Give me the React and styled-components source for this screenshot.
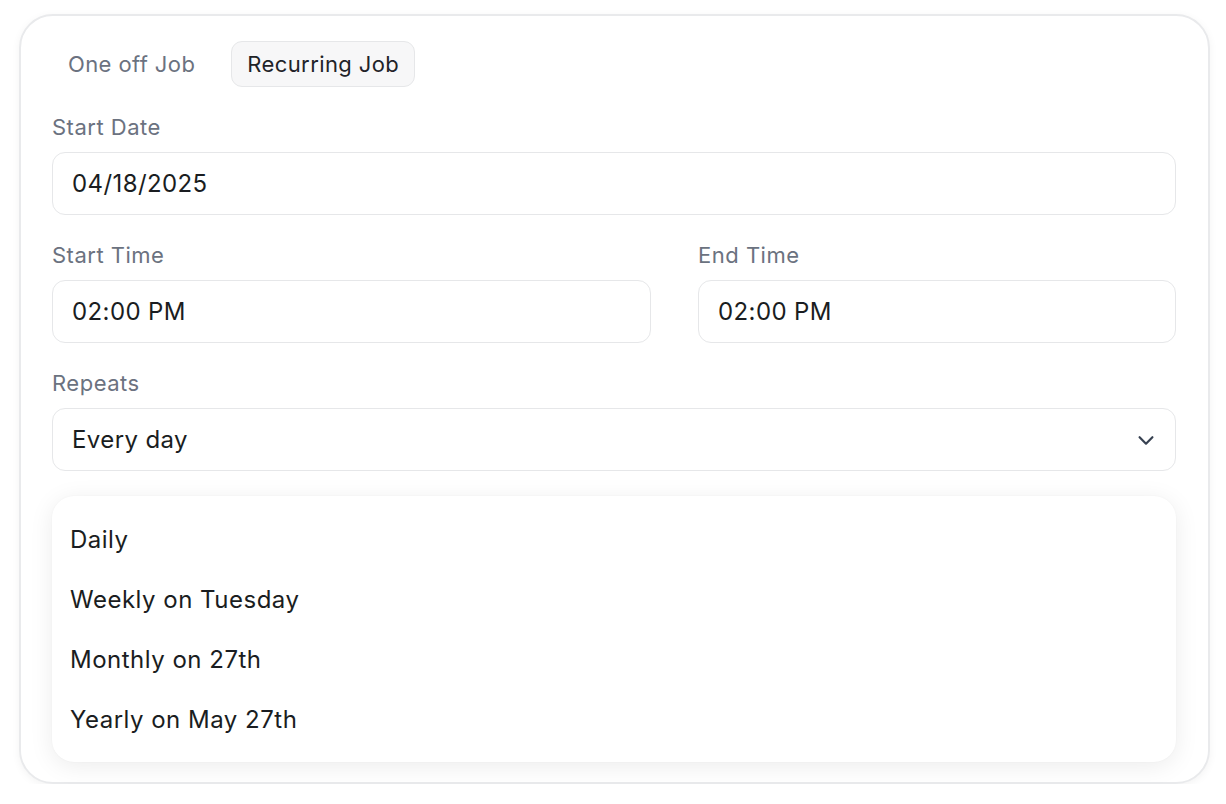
import React from 'react'
import styled, {createGlobalStyle} from 'styled-components'

const Global = createGlobalStyle`
  body { margin: 0; background: #ffffff; font-family: Inter, "Noto Sans", sans-serif; }
`

const Card = styled.div`
  box-sizing: border-box;
  margin: 14px 0 0 19px;
  width: 1191px;
  height: 770px;
  border: 2px solid #e9eaec;
  border-radius: 34px;
  background: #fff;
  box-shadow: 0 2px 8px rgba(0,0,0,0.05);
  padding: 25px 32px 0 31px;
`

const Tabs = styled.div`
  display: flex;
  gap: 20px;
  margin-bottom: 27px;
`

const Tab = styled.div`
  height: 46px;
  box-sizing: border-box;
  display: flex;
  align-items: center;
  padding: 0 15px;
  font-size: 22px;
  letter-spacing: 0.4px;
  border-radius: 11px;
  color: ${p => p.active ? '#1f2328' : '#6b7280'};
  background: ${p => p.active ? '#f7f7f8' : 'transparent'};
  border: 1px solid ${p => p.active ? '#e6e7e9' : 'transparent'};
`

const Label = styled.div`
  font-size: 22px;
  letter-spacing: 0.5px;
  color: #6b7280;
  margin-bottom: 12px;
  line-height: 26px;
`

const Field = styled.div`
  box-sizing: border-box;
  height: 63px;
  border: 1.5px solid #e6e7e9;
  border-radius: 13px;
  display: flex;
  align-items: center;
  justify-content: space-between;
  padding: 0 18px 0 19px;
  font-size: 24px;
  letter-spacing: 0.4px;
  color: #1a1d21;
  margin-bottom: 27px;
`

const Row = styled.div`
  display: grid;
  grid-template-columns: 599px 1fr;
  gap: 47px;
`

const Menu = styled.div`
  margin-top: -2px;
  border-radius: 22px;
  background: #fff;
  box-shadow: 0 4px 24px rgba(0,0,0,0.08), 0 0 2px rgba(0,0,0,0.04);
  padding: 13px 18px;
`

const Item = styled.div`
  height: 60px;
  display: flex;
  align-items: center;
  font-size: 24px;
  letter-spacing: 0.5px;
  color: #1a1d21;
`

export default function App() {
  return (
    <>
      <Global/>
      <Card>
        <Tabs>
          <Tab>One off Job</Tab>
          <Tab active>Recurring Job</Tab>
        </Tabs>
        <Label>Start Date</Label>
        <Field>04/18/2025</Field>
        <Row>
          <div>
            <Label>Start Time</Label>
            <Field>02:00 PM</Field>
          </div>
          <div>
            <Label>End Time</Label>
            <Field>02:00 PM</Field>
          </div>
        </Row>
        <Label>Repeats</Label>
        <Field>
          Every day
          <svg width="22" height="22" viewBox="0 0 24 24" fill="none" stroke="#374151" strokeWidth="2.4" strokeLinecap="round" strokeLinejoin="round"><path d="M5 9l7 7 7-7"/></svg>
        </Field>
        <Menu>
          <Item>Daily</Item>
          <Item>Weekly on Tuesday</Item>
          <Item>Monthly on 27th</Item>
          <Item>Yearly on May 27th</Item>
        </Menu>
      </Card>
    </>
  )
}
